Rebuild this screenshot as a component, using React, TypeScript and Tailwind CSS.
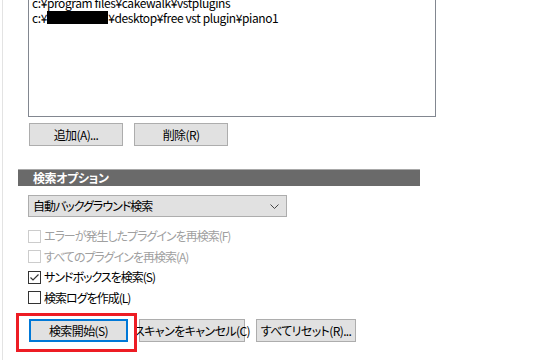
import React from "react";

const font = "font-['Noto_Sans_CJK_JP','Noto_Sans',sans-serif] [font-feature-settings:'palt'_1]";

function Btn({ children, w, focused }: { children: React.ReactNode; w: string; focused?: boolean }) {
  return (
    <div
      className={`${w} h-[23px] flex items-center justify-center bg-[#e1e1e1] text-[12px] tracking-[-0.6px] text-black whitespace-nowrap overflow-visible ${
        focused ? "border-2 border-[#0078d7]" : "border border-[#adadad]"
      }`}
    >
      {children}
    </div>
  );
}

function Check({ label, checked, disabled }: { label: string; checked?: boolean; disabled?: boolean }) {
  return (
    <div className="h-[20.5px] flex items-center">
      <div
        className={`w-[13px] h-[13px] border ${disabled ? "border-[#cccccc]" : "border-[#333333]"} bg-white flex items-center justify-center`}
      >
        {checked && (
          <svg width="11" height="11" viewBox="0 0 11 11">
            <polyline points="1.5,5.5 4,8 9.5,2.5" fill="none" stroke="#333" strokeWidth="1.2" />
          </svg>
        )}
      </div>
      <span className={`ml-[3px] text-[12px] tracking-[-1px] ${disabled ? "text-[#a0a0a0]" : "text-black"}`}>{label}</span>
    </div>
  );
}

export default function App() {
  return (
    <div className={`relative w-[540px] h-[360px] bg-white overflow-hidden ${font}`}>
      <div className="ml-[2px] h-full border-l border-[#e3e3e3] flex flex-col pl-[25px]">
        {/* list box */}
        <div className="mt-[-10px] w-[408px] h-[127px] border border-[#828790] bg-white pl-[3px] pt-[4px] text-[12px] leading-[15px] tracking-[-0.4px] text-black">
          <div>c:¥program files¥cakewalk¥vstplugins</div>
          <div className="flex items-center">
            <span>c:¥r</span>
            <span className="inline-block w-[61px] h-[13px] bg-black ml-[-4px]" />
            <span>¥desktop¥free vst plugin¥piano1</span>
          </div>
        </div>

        {/* add / delete */}
        <div className="flex gap-[11px] mt-[6px] ml-[1px]">
          <Btn w="w-[94px]">追加(A)...</Btn>
          <Btn w="w-[94px]">削除(R)</Btn>
        </div>

        {/* section header */}
        <div className="mt-[23px] ml-[-10px] w-[402px] h-[17px] bg-[#6a6a6a] border-t border-[#a8a8a8] flex items-center pl-[15px]">
          <span className="text-white font-bold text-[12px] leading-none tracking-[-0.4px]">検索オプション</span>
        </div>

        {/* dropdown */}
        <div className="mt-[9px] w-[259px] h-[22px] bg-[#e1e1e1] border border-[#adadad] flex items-center justify-between pl-[4px] pr-[7px]">
          <span className="text-[12px] tracking-[-1px] text-black">自動バックグラウンド検索</span>
          <svg width="9" height="5" viewBox="0 0 9 5">
            <polyline points="0.5,0.5 4.5,4.5 8.5,0.5" fill="none" stroke="#444" strokeWidth="1" />
          </svg>
        </div>

        {/* checkboxes */}
        <div className="mt-[9px] flex flex-col">
          <Check label="エラーが発生したプラグインを再検索(F)" disabled />
          <Check label="すべてのプラグインを再検索(A)" disabled />
          <Check label="サンドボックスを検索(S)" checked />
          <Check label="検索ログを作成(L)" />
        </div>

        {/* bottom buttons */}
        <div className="flex gap-[11px] mt-[11px] ml-[1px]">
          <Btn w="w-[99px]" focused>検索開始(S)</Btn>
          <Btn w="w-[106px]">スキャンをキャンセル(C)</Btn>
          <Btn w="w-[100px]">すべてリセット(R)...</Btn>
        </div>
      </div>

      {/* red annotation box */}
      <div className="absolute left-[16px] top-[313px] w-[121px] h-[39px] border-[3px] border-[#ed1c24]" />
    </div>
  );
}
